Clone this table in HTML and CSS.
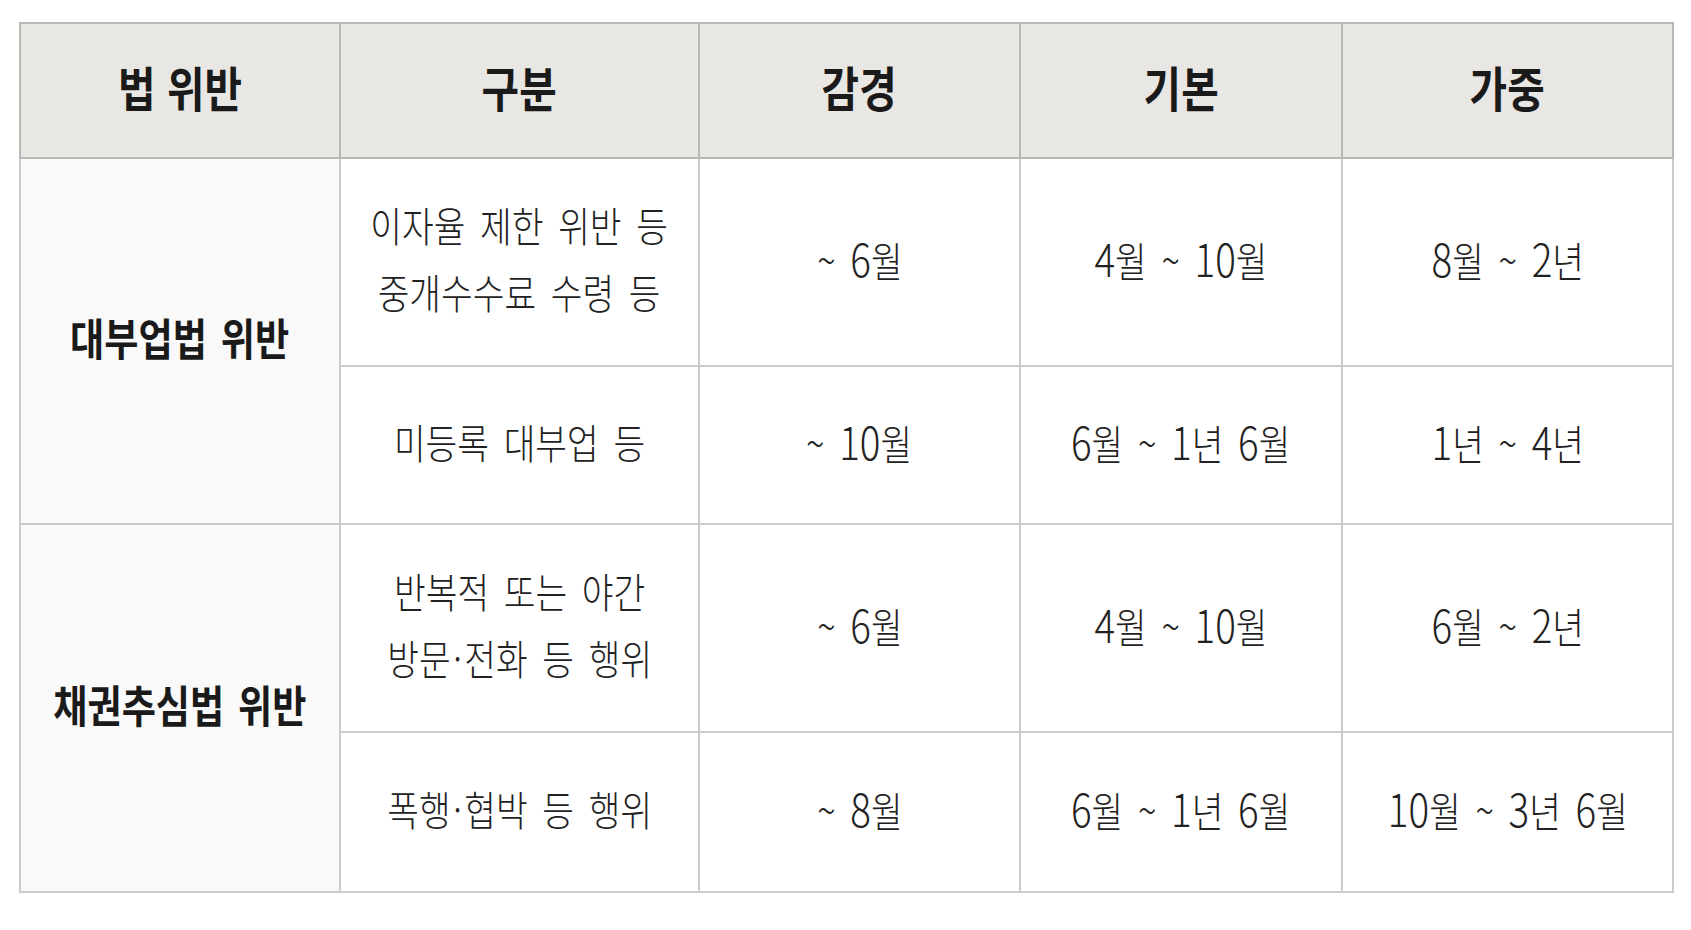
FILE: index.html
```html
<!DOCTYPE html>
<html lang="ko">
<head>
<meta charset="utf-8">
<link rel="stylesheet" href="styles.css">
</head>
<body>
<div class="page">
<table class="grid">
  <colgroup>
    <col class="c1"><col class="c2"><col class="c3"><col class="c4"><col class="c5">
  </colgroup>
  <thead>
    <tr class="hrow">
      <th><span class="t">법 위반</span></th>
      <th><span class="t">구분</span></th>
      <th><span class="t">감경</span></th>
      <th><span class="t">기본</span></th>
      <th><span class="t">가중</span></th>
    </tr>
  </thead>
  <tbody>
    <tr class="tall">
      <td class="law" rowspan="2"><span class="t">대부업법 위반</span></td>
      <td><span class="t two">이자율 제한 위반 등<br>중개수수료 수령 등</span></td>
      <td><span class="t">~ <span class="n">6</span>월</span></td>
      <td><span class="t"><span class="n">4</span>월 ~ <span class="n">10</span>월</span></td>
      <td><span class="t"><span class="n">8</span>월 ~ <span class="n">2</span>년</span></td>
    </tr>
    <tr class="short">
      <td><span class="t">미등록 대부업 등</span></td>
      <td><span class="t">~ <span class="n">10</span>월</span></td>
      <td><span class="t"><span class="n">6</span>월 ~ <span class="n">1</span>년 <span class="n">6</span>월</span></td>
      <td><span class="t"><span class="n">1</span>년 ~ <span class="n">4</span>년</span></td>
    </tr>
    <tr class="tall">
      <td class="law" rowspan="2"><span class="t">채권추심법 위반</span></td>
      <td><span class="t two">반복적 또는 야간<br>방문<span class="dot">·</span>전화 등 행위</span></td>
      <td><span class="t">~ <span class="n">6</span>월</span></td>
      <td><span class="t"><span class="n">4</span>월 ~ <span class="n">10</span>월</span></td>
      <td><span class="t"><span class="n">6</span>월 ~ <span class="n">2</span>년</span></td>
    </tr>
    <tr class="short2">
      <td><span class="t">폭행<span class="dot">·</span>협박 등 행위</span></td>
      <td><span class="t">~ <span class="n">8</span>월</span></td>
      <td><span class="t"><span class="n">6</span>월 ~ <span class="n">1</span>년 <span class="n">6</span>월</span></td>
      <td><span class="t"><span class="n">10</span>월 ~ <span class="n">3</span>년 <span class="n">6</span>월</span></td>
    </tr>
  </tbody>
</table>
</div>
</body>
</html>
```

FILE: styles.css
```css
html, body {
  margin: 0;
  padding: 0;
  background: #ffffff;
}

.page {
  padding: 22px 19px 0 19px;
  font-family: "Noto Sans CJK KR", "Noto Sans", sans-serif;
  color: #1e1e1e;
}

.grid {
  border-collapse: collapse;
  table-layout: fixed;
  width: 1653px;
}

.c1 { width: 320px; }
.c2 { width: 359px; }
.c3 { width: 321px; }
.c4 { width: 322px; }
.c5 { width: 331px; }

.grid th,
.grid td {
  border: 2px solid #cbcbcb;
  padding: 0 0 8px 0;
  text-align: center;
  vertical-align: middle;
  white-space: nowrap;
}

.grid th {
  background: #e9e7e3;
  border-color: #b9b7b4;
  font-weight: 700;
  font-size: 48px;
  line-height: 1;
  color: #1a1a1a;
  padding-bottom: 10px;
}

.hrow { height: 135px; }
.tall { height: 208px; }
.short { height: 158px; }
.short2 { height: 160px; }

.grid td {
  font-size: 41px;
  line-height: 1;
  font-weight: 300;
  word-spacing: 6px;
  color: #222222;
}

.grid td.law {
  background: #f9f9f9;
  font-weight: 700;
  font-size: 44px;
  word-spacing: 4px;
  color: #1a1a1a;
}

.t {
  display: inline-block;
  transform: scaleX(0.84);
}

.grid th .t { transform: scaleX(0.85); word-spacing: 0; }
.grid td.law .t { transform: scaleX(0.845); }

.n { font-size: 1.12em; line-height: 1; }

.dot { margin: 0 3px; }

.t.two { line-height: 67px; }
```
